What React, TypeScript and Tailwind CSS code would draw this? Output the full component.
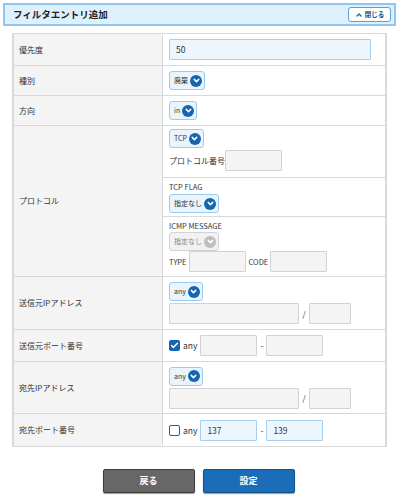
import { ChevronDown, ChevronUp, Check } from 'lucide-react'

const FONT = { fontFamily: '"Noto Sans CJK JP", "Noto Sans", sans-serif' }

function Select({ label, disabled = false }: { label: string; disabled?: boolean }) {
  return (
    <div className="flex">
      <div
        className={`flex items-center gap-[2px] h-[19px] pl-[4px] pr-[2px] rounded-[3px] border text-[7px] leading-none ${
          disabled ? 'bg-[#f2f2f2] border-[#d4d4d4] text-[#888]' : 'bg-[#eaf4fd] border-[#9ccbf1] text-[#333]'
        }`}
      >
        <span>{label}</span>
        <span
          className={`w-[12px] h-[12px] rounded-full flex items-center justify-center ${
            disabled ? 'bg-[#bdbdbd]' : 'bg-[#1565b0]'
          }`}
        >
          <ChevronDown className="w-[9px] h-[9px] text-white" strokeWidth={4} />
        </span>
      </div>
    </div>
  )
}

function Input({ w, value, blue = false }: { w: string; value?: string; blue?: boolean }) {
  return (
    <div
      className={`${w} h-[21px] border flex items-center pl-[6px] text-[8.5px] leading-none text-[#333] rounded-[1px] ${
        blue ? 'bg-[#eef6fd] border-[#a6d0f2]' : 'bg-[#f4f4f4] border-[#d2d2d2]'
      }`}
    >
      {value}
    </div>
  )
}

function Row({ label, h, children }: { label: string; h: string; children: React.ReactNode }) {
  return (
    <div className="flex border-b border-[#d9d9d9]">
      <div className={`w-[149px] ${h} bg-[#f4f4f4] border-r border-[#d9d9d9] flex items-center pl-[5px] text-[8px] text-[#333]`}>
        {label}
      </div>
      <div className="flex-1 flex flex-col justify-center pl-[6px] gap-[2px]">{children}</div>
    </div>
  )
}

export default function App() {
  return (
    <div className="w-[399px] h-[498px] bg-white pt-[3px]" style={FONT}>
      {/* Header */}
      <div className="mx-[3px] h-[23px] border-2 border-[#8ec5f1] bg-[#dff0fd] flex items-center justify-between pl-[8px] pr-[3px]">
        <span className="text-[9.5px] font-bold text-[#222]">フィルタエントリ追加</span>
        <div className="h-[15px] w-[43px] bg-white border border-[#5b9fd6] rounded-[3px] flex items-center justify-center gap-[2px] text-[6.5px] font-bold text-[#1b4f80]">
          <ChevronUp className="w-[8px] h-[8px] text-[#1565b0]" strokeWidth={4} />
          閉じる
        </div>
      </div>

      {/* Table */}
      <div className="mx-[12px] mt-[7px] border-x-2 border-t border-[#d9d9d9] w-[375px]">
        <Row label="優先度" h="h-[31px]">
          <Input w="w-[202px]" value="50" blue />
        </Row>
        <Row label="種別" h="h-[29px]">
          <Select label="廃棄" />
        </Row>
        <Row label="方向" h="h-[29px]">
          <Select label="in" />
        </Row>

        {/* Protocol */}
        <div className="flex border-b border-[#d9d9d9]">
          <div className="w-[149px] bg-[#f4f4f4] border-r border-[#d9d9d9] flex items-center pl-[5px] text-[8px] text-[#333]">
            プロトコル
          </div>
          <div className="flex-1 flex flex-col">
            <div className="h-[52px] border-b border-[#d9d9d9] pl-[6px] pt-[3px] flex flex-col gap-[2px]">
              <Select label="TCP" />
              <div className="flex items-center text-[8px] text-[#333]">
                <span>プロトコル番号</span>
                <Input w="w-[57px]" />
              </div>
            </div>
            <div className="h-[39px] border-b border-[#d9d9d9] pl-[6px] pt-[3px] flex flex-col gap-[1px]">
              <span className="text-[7.5px] leading-[12px] text-[#333]">TCP FLAG</span>
              <Select label="指定なし" />
            </div>
            <div className="h-[59px] pl-[6px] pt-[3px] flex flex-col">
              <span className="text-[7.5px] leading-[12px] text-[#333]">ICMP MESSAGE</span>
              <Select label="指定なし" disabled />
              <div className="flex items-center text-[7.5px] text-[#333]">
                <span className="mr-[2px]">TYPE</span>
                <Input w="w-[57px]" />
                <span className="ml-[3px] mr-[2px]">CODE</span>
                <Input w="w-[57px]" />
              </div>
            </div>
          </div>
        </div>

        <Row label="送信元IPアドレス" h="h-[52px]">
          <Select label="any" />
          <div className="flex items-center">
            <Input w="w-[130px]" />
            <span className="w-[10px] text-center text-[8px] text-[#333]">/</span>
            <Input w="w-[42px]" />
          </div>
        </Row>
        <Row label="送信元ポート番号" h="h-[31px]">
          <div className="flex items-center text-[8.5px] text-[#333]">
            <span className="w-[11px] h-[11px] rounded-[2px] bg-[#1565b0] flex items-center justify-center">
              <Check className="w-[9px] h-[9px] text-white" strokeWidth={4} />
            </span>
            <span className="ml-[3px] mr-[3px]">any</span>
            <Input w="w-[57px]" />
            <span className="w-[9px] text-center">-</span>
            <Input w="w-[57px]" />
          </div>
        </Row>
        <Row label="宛先IPアドレス" h="h-[51px]">
          <Select label="any" />
          <div className="flex items-center">
            <Input w="w-[130px]" />
            <span className="w-[10px] text-center text-[8px] text-[#333]">/</span>
            <Input w="w-[42px]" />
          </div>
        </Row>
        <Row label="宛先ポート番号" h="h-[32px]">
          <div className="flex items-center text-[8.5px] text-[#333]">
            <span className="w-[11px] h-[11px] rounded-[2px] bg-white border-[1.5px] border-[#1565b0]" />
            <span className="ml-[3px] mr-[3px]">any</span>
            <Input w="w-[57px]" value="137" blue />
            <span className="w-[9px] text-center">-</span>
            <Input w="w-[57px]" value="139" blue />
          </div>
        </Row>
      </div>

      {/* Buttons */}
      <div className="flex justify-center gap-[8px] mt-[22px] pr-[2px]">
        <button className="w-[92px] h-[24px] rounded-[2px] bg-[#676767] border border-[#3e3e3e] shadow-[0_1px_1px_rgba(0,0,0,0.4)] text-white text-[9px] font-bold">
          戻る
        </button>
        <button className="w-[92px] h-[24px] rounded-[2px] bg-[#1b6db7] border border-[#10508c] shadow-[0_1px_1px_rgba(0,0,0,0.4)] text-white text-[9px] font-bold">
          設定
        </button>
      </div>
    </div>
  )
}
